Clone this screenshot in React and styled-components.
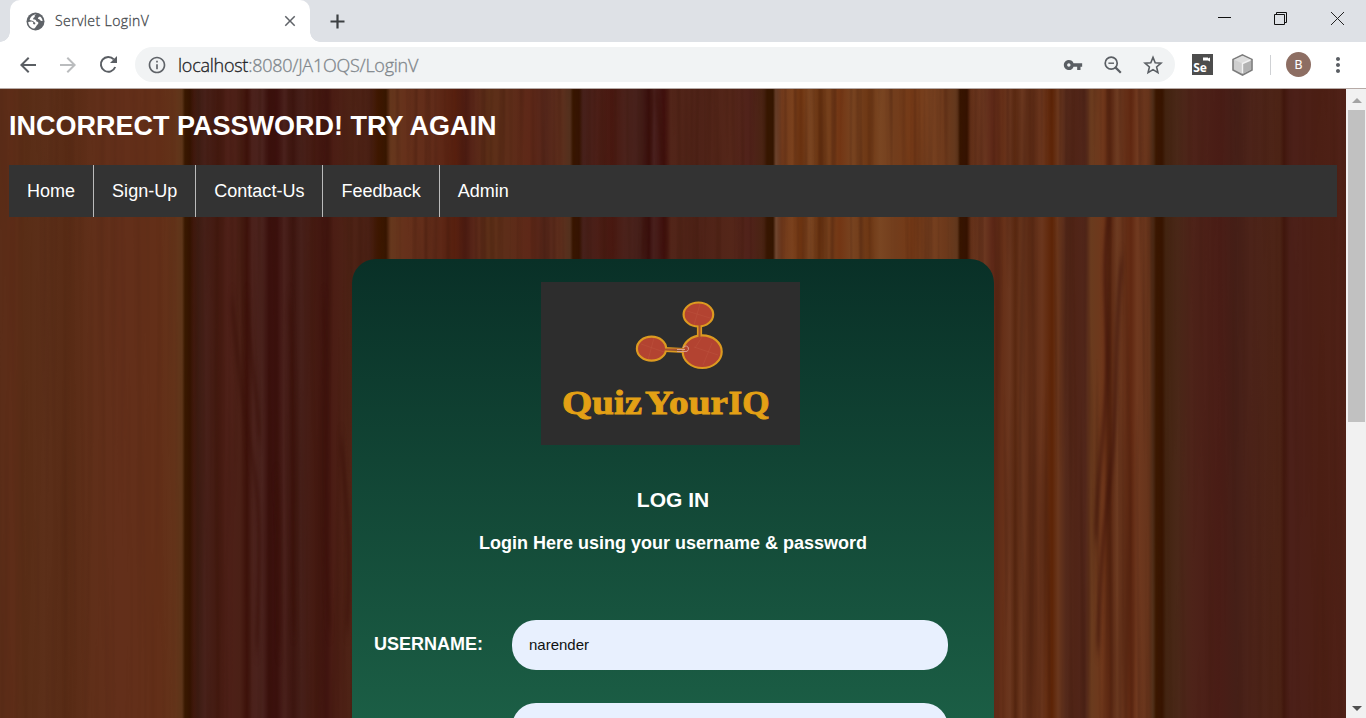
import React from "react";
import styled, { createGlobalStyle } from "styled-components";
import {
  MdClose,
  MdArrowBack,
  MdArrowForward,
  MdInfoOutline,
  MdVpnKey,
  MdMoreVert,
} from "react-icons/md";

const GlobalStyle = createGlobalStyle`
  * { box-sizing: border-box; }
  html, body { margin: 0; padding: 0; overflow: hidden; }
  body { font-family: "Liberation Sans", Arial, sans-serif; }
`;

const Window = styled.div`
  width: 1366px;
  height: 718px;
  display: flex;
  flex-direction: column;
  overflow: hidden;
  background: #fff;
`;

/* ---------- browser chrome ---------- */

const TabStrip = styled.div`
  height: 42px;
  flex: none;
  display: flex;
  background: #dee1e6;
  padding-left: 10px;
`;

const Tab = styled.div`
  position: relative;
  width: 300px;
  height: 42px;
  display: flex;
  align-items: center;
  padding: 0 11px 0 16px;
  border-radius: 10px 10px 0 0;
  background: #fff;
  color: #5f6368;

  &::before,
  &::after {
    content: "";
    position: absolute;
    bottom: 0;
    width: 10px;
    height: 10px;
  }
  &::before {
    left: -10px;
    background: radial-gradient(circle at 0 0, transparent 9.5px, #fff 10px);
  }
  &::after {
    right: -10px;
    background: radial-gradient(circle at 100% 0, transparent 9.5px, #fff 10px);
  }
`;

const TabTitle = styled.span`
  flex: 1;
  margin-left: 10px;
  font: 300 14px/20px "Open Sans", "Noto Sans", sans-serif;
  letter-spacing: 0.4px;
  -webkit-text-stroke: 0.3px currentColor;
  color: #45494d;
`;

const NewTab = styled.div`
  width: 55px;
  display: flex;
  align-items: center;
  justify-content: center;
  color: #3c4043;
`;

const WindowControls = styled.div`
  margin-left: auto;
  display: flex;
  height: 37px;
`;

const Control = styled.div`
  width: ${(p) => p.$w}px;
  display: flex;
  align-items: center;
  justify-content: center;
`;

const Toolbar = styled.div`
  height: 47px;
  flex: none;
  display: flex;
  align-items: center;
  padding: 0 8px 1px;
  border-bottom: 1px solid #b6aaa6;
  background: #fff;
`;

const IconCell = styled.div`
  width: 40px;
  height: 36px;
  display: flex;
  align-items: center;
  justify-content: center;
  color: ${(p) => (p.$dim ? "#babcbe" : "#5a5e63")};
`;

const AddressBar = styled.div`
  width: 1040px;
  height: 35px;
  margin-left: 7px;
  margin-right: 7px;
  padding: 0 2px 0 12px;
  display: flex;
  align-items: center;
  border-radius: 18px;
  background: #f1f3f4;
  color: #5f6368;
`;

const Url = styled.span`
  flex: 1;
  margin-left: 11px;
  font: 300 18px/24px "Open Sans", "Noto Sans", sans-serif;
  letter-spacing: -0.25px;
  -webkit-text-stroke: 0.3px currentColor;
  color: #80868b;

  b {
    font-weight: inherit;
    color: #202124;
  }
`;

const Divider = styled.div`
  width: 1px;
  height: 20px;
  margin-left: 8px;
  background: #cfd1d4;
`;

const Avatar = styled.div`
  width: 25px;
  height: 25px;
  margin: 0 7px 0 15px;
  border-radius: 50%;
  background: #8d6e63;
  color: #fff;
  font: 400 13px/25px Roboto, sans-serif;
  text-align: center;
`;

/* ---------- web page ---------- */

const Viewport = styled.div`
  flex: 1;
  min-height: 0;
  display: flex;
`;

const Page = styled.main`
  position: relative;
  isolation: isolate;
  flex: 1;
  min-width: 0;
  overflow: hidden;
  padding: 0 9px;
`;

const WoodLayer = styled.svg`
  position: absolute;
  inset: 0;
  z-index: -1;
`;

const Alert = styled.h1`
  margin: 22px 0 23px;
  font-size: 27px;
  line-height: 31px;
  font-weight: 700;
  color: #fff;
`;

const Nav = styled.nav`
  height: 52px;
  width: 1328px;
  display: flex;
  background: #333;
`;

const NavLink = styled.a`
  padding: 0 18px;
  font-size: 18px;
  letter-spacing: 0.018px;
  line-height: 52px;
  color: #fff;
  border-right: ${(p) => (p.$last ? "0" : "1px solid #bbb")};
`;

const Card = styled.section`
  width: 642px;
  height: 600px;
  margin: 42px auto 0;
  padding-top: 23px;
  display: flex;
  flex-direction: column;
  align-items: center;
  border-radius: 24px 24px 0 0;
  background: linear-gradient(#093027 0, #114434 200px, #1b5e45 460px, #226f52 600px);
  color: #fff;
`;

const Logo = styled.svg`
  flex: none;
  margin-right: 5px;
  background: #2d2d2d;
`;

const Title = styled.h3`
  margin: 42px 0 0;
  font-size: 21px;
  line-height: 26px;
`;

const Subtitle = styled.h4`
  margin: 19px 0 66px;
  font-size: 18px;
  line-height: 22px;
`;

const Field = styled.div`
  width: 598px;
  height: 50px;
  margin-bottom: 33px;
  display: flex;
  align-items: center;
`;

const Label = styled.label`
  width: 138px;
  padding-bottom: 2px;
  font-size: 18px;
  font-weight: 700;
`;

const Input = styled.input`
  width: 436px;
  height: 50px;
  padding: 0 17px 1px;
  border: 0;
  outline: 0;
  border-radius: 24px;
  background: #e8f0fe;
  font: 15px "Liberation Sans", Arial, sans-serif;
  color: #111;
`;

const Scrollbar = styled.div`
  width: 20px;
  display: flex;
  flex-direction: column;
  align-items: center;
  padding: 9px 0 7px 1px;
  background: #f1f1f1;
`;

const Arrow = styled.div`
  border: 5px solid transparent;
  ${(p) =>
    p.$down
      ? "border-top-color:#505050;border-bottom:0;margin-top:auto;"
      : "border-bottom-color:#a3a3a3;border-top:0;margin-bottom:7px;"}
`;

const Thumb = styled.div`
  width: 17px;
  height: 312px;
  background: #c1c1c1;
`;

/* plank colours: [x, colour] */
const PLANKS = [
  [0, "#5b2d18"], [12, "#5e2d18"], [24, "#592d16"], [45, "#5c2f19"], [66, "#582b15"], [90, "#602f19"],
  [120, "#632f1a"], [160, "#632f18"], [175, "#64341a"], [182, "#5e361a"], [185, "#391900"], [190, "#341300"],
  [194, "#41190e"], [198, "#3d1c12"], [205, "#48211a"], [218, "#43190f"], [228, "#4e2018"], [240, "#4b2016"],
  [247, "#3d110a"], [252, "#4b211b"], [262, "#4b231e"], [269, "#3a100c"], [277, "#3b100d"], [284, "#4a211c"],
  [293, "#3d150f"], [301, "#47201a"], [314, "#451a11"], [327, "#40140f"], [333, "#4b1d14"], [350, "#4e2316"],
  [370, "#4a2014"], [378, "#3f1800"], [386, "#371600"], [390, "#66381d"], [405, "#66311b"], [435, "#602b19"],
  [455, "#58200f"], [466, "#4d1c12"], [475, "#5a2819"], [490, "#5d3018"], [508, "#5d2d19"], [530, "#5e2818"],
  [545, "#54261a"], [560, "#5f2f1d"], [570, "#53301d"], [573, "#381600"], [579, "#351300"], [583, "#46201a"],
  [600, "#4c1e16"], [612, "#481810"], [625, "#4b221b"], [640, "#46201b"], [649, "#380e0b"], [654, "#4b2220"],
  [664, "#3f0f0c"], [671, "#522519"], [700, "#4e2217"], [730, "#542619"], [750, "#50221a"], [764, "#492412"],
  [767, "#371700"], [773, "#341500"], [776, "#6f4630"], [782, "#70391b"], [792, "#7a411d"], [801, "#6f3511"],
  [810, "#7b4622"], [820, "#66310f"], [828, "#75401c"], [840, "#733614"], [852, "#774320"], [869, "#6d3714"],
  [880, "#7a4622"], [895, "#723d1c"], [912, "#753a17"], [930, "#774120"], [945, "#6d391b"], [957, "#62381d"],
  [960, "#371500"], [967, "#351200"], [971, "#643119"], [985, "#6b3720"], [992, "#5d2817"], [1003, "#663018"],
  [1010, "#6b371f"], [1015, "#592810"], [1022, "#6d3920"], [1030, "#5b2a14"], [1042, "#6b361d"], [1052, "#5d2406"],
  [1058, "#6a371d"], [1066, "#54291a"], [1075, "#502416"], [1085, "#51261a"], [1091, "#6a3b1e"], [1103, "#6f371b"],
  [1110, "#582510"], [1117, "#6d3b21"], [1131, "#602811"], [1137, "#70391f"], [1149, "#66341b"], [1153, "#51301a"],
  [1156, "#3b1800"], [1162, "#371400"], [1166, "#432411"], [1177, "#4a2818"], [1192, "#4e2319"], [1220, "#4a1d16"],
  [1236, "#451f17"], [1250, "#4c2319"], [1280, "#4d2416"], [1284, "#41170d"], [1290, "#4c2019"], [1320, "#4c1f14"],
  [1346, "#4f2117"],
];

const GRAIN = [
  "M232 211C237 270 245 330 254 380S258 500 257 560",
  "M247 211C249 280 260 310 259 350",
  "M290 211C295 300 291 420 294 540",
  "M276 390C281 430 279 490 279 560",
  "M324 211C328 330 322 450 330 540",
  "M341 350C345 400 352 450 347 540",
  "M653 0C648 50 650 100 642 170",
  "M656 0C662 40 666 110 666 170",
  "M1110 120C1100 180 1108 220 1107 280S1096 390 1096 450",
  "M1122 170C1114 240 1118 310 1112 370S1100 460 1098 560",
];

function Wood() {
  return (
    <WoodLayer width="1346" height="629" viewBox="0 0 1346 629" aria-hidden="true">
      <defs>
        <linearGradient id="planks" gradientUnits="userSpaceOnUse" x1="0" y1="0" x2="1346" y2="0">
          {PLANKS.map(([x, c]) => (
            <stop key={x} offset={x / 1346} stopColor={c} />
          ))}
        </linearGradient>
        <filter id="streaks" x="0" y="0" width="100%" height="100%" colorInterpolationFilters="sRGB">
          <feTurbulence type="fractalNoise" baseFrequency="0.16 0.003" numOctaves="2" seed="7" />
          <feColorMatrix values="0 0 0 0 0.22  0 0 0 0 0.08  0 0 0 0 0.03  1.8 0 0 0 -0.8" />
        </filter>
        <filter id="soften" x="-5%" y="-5%" width="110%" height="110%" colorInterpolationFilters="sRGB">
          <feGaussianBlur stdDeviation="1.5 8" />
        </filter>
      </defs>
      <rect width="1346" height="629" fill="url(#planks)" />
      <rect x="194" width="966" height="629" filter="url(#streaks)" opacity="0.45" />
      <rect x="1160" width="186" height="629" filter="url(#streaks)" opacity="0.2" />
      <rect width="194" height="629" filter="url(#streaks)" opacity="0.15" />
      <g filter="url(#soften)" fill="none" stroke="#3a0f08" strokeOpacity="0.5" strokeWidth="4">
        {GRAIN.map((d) => (
          <path key={d} d={d} />
        ))}
      </g>
    </WoodLayer>
  );
}

function QuizLogo() {
  return (
    <Logo width="259" height="163" viewBox="541 282 259 163">
      <g fill="#b34331" stroke="#dc9a20" strokeWidth="2.2">
        <path d="M698 325V338M701 325V338M665 348L684 349M665 351L684 352" />
        <ellipse cx="698.4" cy="314.5" rx="14.8" ry="12" />
        <ellipse cx="651.5" cy="348.7" rx="14.6" ry="12" />
        <ellipse cx="702.2" cy="351.7" rx="19.5" ry="16.3" />
      </g>
      <path d="M699.5 325V338M665 349.5H685" stroke="#a9542e" strokeWidth="2" />
      <path d="M677 349.5H685M677 351.5H685A2.8 2.8 0 1 0 683 348" fill="none" stroke="#dba08c" strokeWidth="1" />
      <path
        d="M687 311L710 318M700 304L694 325M641 344L664 352M654 338L648 360M694 347L718 355M702 337L695 348M712 343L703 365"
        stroke="#c9664f"
        strokeWidth="0.5"
        opacity="0.45"
      />
      <text
        y="414"
        fontFamily="'Liberation Serif', serif"
        fontWeight="700"
        fontSize="34"
        fill="#e3a015"
        stroke="#e3a015"
        strokeWidth="0.9"
      >
        <tspan x="562" textLength="80" lengthAdjust="spacingAndGlyphs">Quiz</tspan>
        <tspan x="645" textLength="83" lengthAdjust="spacingAndGlyphs">Your</tspan>
        <tspan x="728.5" textLength="41" lengthAdjust="spacingAndGlyphs">IQ</tspan>
      </text>
    </Logo>
  );
}

function PlusIcon() {
  return (
    <svg width="15" height="15" viewBox="0 0 15 15">
      <path d="M7.5 0.5V14.5M0.5 7.5H14.5" stroke="currentColor" strokeWidth="2.2" />
    </svg>
  );
}

function GlobeIcon() {
  return (
    <svg width="19" height="19" viewBox="0 0 19 19">
      <circle cx="9.5" cy="9.5" r="9" fill="#5f6368" />
      <path
        d="M10.4 2.4C8.6 2.8 8 4 9 4.8C7.4 5.6 6.8 6.6 7.4 7.6C9 7.4 10.2 8 10.4 9.4C12 9.6 13 10.6 12 12C10.4 13 10.4 14.8 8.4 16.6C4.8 16.4 2.4 13.4 2.2 10L5.6 9.6C7 9.8 7.8 10.8 7 12L9 12.4L9.4 11L7 9L3.6 8C4.4 4.6 7 2.2 10.4 2.4ZM14 4.4C15.8 5.8 16.6 7.4 16.6 9C15.2 9 14.4 8.4 13.6 7.4L12 6.8C11.6 5.8 12.6 5.2 14 4.4Z"
        fill="#fff"
      />
    </svg>
  );
}

function ReloadIcon() {
  return (
    <svg width="19" height="19" viewBox="0 0 19 19">
      <path d="M16.2 12A7.4 7.4 0 1 1 14.8 4.4" fill="none" stroke="currentColor" strokeWidth="2" />
      <path d="M18 1V8H11Z" fill="currentColor" />
    </svg>
  );
}

function ZoomOutIcon() {
  return (
    <svg width="18" height="18" viewBox="0 0 18 18" fill="none" stroke="currentColor">
      <circle cx="7.2" cy="7.2" r="6" strokeWidth="1.7" />
      <path d="M4.4 7.2H10" strokeWidth="1.4" />
      <path d="M11.4 11.4L16.8 16.8" strokeWidth="2.2" />
    </svg>
  );
}

function StarIcon() {
  return (
    <svg width="20" height="20" viewBox="0 0 20 20">
      <path
        d="M10 2.4L12.2 7.7L18 8.2L13.6 12L14.9 17.6L10 14.6L5.1 17.6L6.4 12L2 8.2L7.8 7.7Z"
        fill="none"
        stroke="currentColor"
        strokeWidth="1.6"
      />
    </svg>
  );
}

function SeleniumIcon() {
  return (
    <svg width="21" height="21" viewBox="0 0 21 21">
      <rect width="21" height="21" fill="#4d4d4d" />
      <path d="M11 3.5h5v1l2-1v4l-2-1h-5z" fill="#fff" />
      <text x="1.2" y="18" fontFamily="'Open Sans', sans-serif" fontWeight="700" fontSize="12" fill="#fff">
        Se
      </text>
    </svg>
  );
}

function CubeIcon() {
  return (
    <svg width="21" height="22" viewBox="0 0 21 22">
      <path d="M10.5 1L20 5.5V16L10.5 21L1 16V5.5Z" fill="#cfcfcf" stroke="#7c7c7c" strokeWidth="1.6" />
      <path d="M10.5 1.8L19 5.8L10.5 9.5L2 5.8Z" fill="#dedede" />
      <path d="M10.5 9.5L19 5.8V15.6L10.5 20Z" fill="#b2b2b2" />
      <path d="M10.5 19V9.5L18.5 6" fill="none" stroke="#f2f2f2" strokeWidth="1.4" />
    </svg>
  );
}

const LINKS = ["Home", "Sign-Up", "Contact-Us", "Feedback", "Admin"];

export default function App() {
  return (
    <>
      <GlobalStyle />
      <Window>
        <TabStrip>
          <Tab>
            <GlobeIcon />
            <TabTitle>Servlet LoginV</TabTitle>
            <MdClose size={18} />
          </Tab>
          <NewTab>
            <PlusIcon />
          </NewTab>
          <WindowControls>
            <Control $w={55}>
              <svg width="13" height="13"><path d="M0 5.5h13" stroke="#111" /></svg>
            </Control>
            <Control $w={57}>
              <svg width="13" height="13" fill="none" stroke="#111">
                <path d="M.5 2.5h10v10h-10zM2.5 2.5v-2h10v10h-2" />
              </svg>
            </Control>
            <Control $w={57}>
              <svg width="13" height="13"><path d="M0 0L13 13M13 0L0 13" stroke="#222" /></svg>
            </Control>
          </WindowControls>
        </TabStrip>

        <Toolbar>
          <IconCell><MdArrowBack size={24} /></IconCell>
          <IconCell $dim><MdArrowForward size={24} /></IconCell>
          <IconCell><ReloadIcon /></IconCell>
          <AddressBar>
            <MdInfoOutline size={20} />
            <Url><b>localhost</b>:8080/JA1OQS/LoginV</Url>
            <IconCell><MdVpnKey size={20} /></IconCell>
            <IconCell><ZoomOutIcon /></IconCell>
            <IconCell><StarIcon /></IconCell>
          </AddressBar>
          <IconCell><SeleniumIcon /></IconCell>
          <IconCell><CubeIcon /></IconCell>
          <Divider />
          <Avatar>B</Avatar>
          <IconCell><MdMoreVert size={24} /></IconCell>
        </Toolbar>

        <Viewport>
          <Page>
            <Wood />
            <Alert>INCORRECT PASSWORD! TRY AGAIN</Alert>
            <Nav>
              {LINKS.map((t, i) => (
                <NavLink key={t} $last={i === LINKS.length - 1}>{t}</NavLink>
              ))}
            </Nav>
            <Card>
              <QuizLogo />
              <Title>LOG IN</Title>
              <Subtitle>Login Here using your username &amp; password</Subtitle>
              <Field>
                <Label>USERNAME:</Label>
                <Input defaultValue="narender" />
              </Field>
              <Field>
                <Label />
                <Input type="password" />
              </Field>
            </Card>
          </Page>
          <Scrollbar>
            <Arrow />
            <Thumb />
            <Arrow $down />
          </Scrollbar>
        </Viewport>
      </Window>
    </>
  );
}
